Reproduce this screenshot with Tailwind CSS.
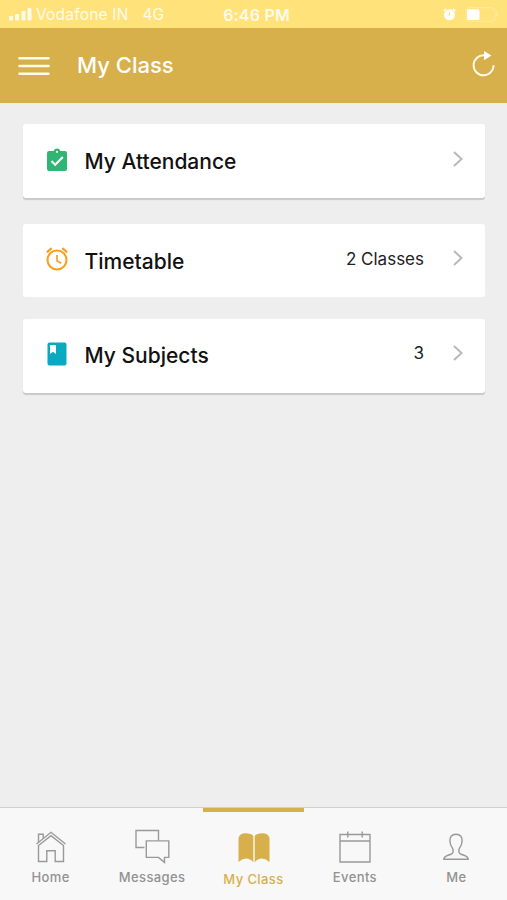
<!DOCTYPE html>
<html lang="en">
<head>
  <meta charset="UTF-8">
  <meta name="viewport" content="width=device-width, initial-scale=1.0">
  <title>My Class</title>
  <script src="https://cdn.jsdelivr.net/npm/@tailwindcss/browser@4"></script>
</head>
<body class="bg-[#eeeeee] font-['Inter',sans-serif]">

  <div class="w-full h-[900px] flex flex-col overflow-hidden">

    <!-- Status bar -->
    <div class="h-7 shrink-0 bg-[#ffe27a] text-white/85 grid grid-cols-[1fr_auto_1fr] items-center pl-[9px] pr-2 text-base leading-7">
      <div class="flex items-center whitespace-nowrap">
        <svg class="w-[23px] h-[13px] mr-[4px]" viewBox="0 0 23 13" fill="currentColor">
          <rect x="0" y="8" width="4" height="4.500" rx="1"/>
          <rect x="6" y="6" width="4" height="6.500" rx="1"/>
          <rect x="12.500" y="3" width="4" height="9.500" rx="1"/>
          <rect x="18.500" y="0" width="4" height="12.500" rx="1"/>
        </svg>
        <span class="text-[15.5px] mt-px tracking-[0.2px]">Vodafone IN</span>
        <span class="text-[15.5px] mt-px ml-[14px]">4G</span>
      </div>
      <span class="font-semibold text-[16px] mt-px ml-[5px] tracking-[0.2px]">6:46 PM</span>
      <div class="flex items-center justify-end">
        <svg class="w-[13px] h-[13px] mr-[9px]" viewBox="0 0 13 13">
          <circle cx="6.500" cy="6.800" r="5.500" fill="#fff"/>
          <path d="M.8 3 3 .9M12.200 3 10 .9" stroke="#fff" stroke-width="1.500"/>
          <path d="M6.500 4v3H4.500" stroke="#ffe27a" stroke-width="1" fill="none"/>
        </svg>
        <svg class="w-[34px] h-[15px]" viewBox="0 0 34 15">
          <rect x="1" y=".8" width="29" height="13.500" rx="3" fill="none" stroke="#fff" stroke-opacity=".3"/>
          <rect x="2" y="2.200" width="12.500" height="10.800" rx="1.500" fill="#fff"/>
          <path d="M32 5.500v4" stroke="#fff" stroke-opacity=".35" stroke-width="1.500"/>
        </svg>
      </div>
    </div>

    <!-- Header -->
    <header class="h-[75px] shrink-0 bg-[#d7b04c] text-white flex items-center pl-[18px] pr-3">
      <svg class="w-8 h-5" viewBox="0 0 32 20" fill="none" stroke="#fffbe9" stroke-width="2.600" stroke-linecap="round">
        <path d="M1.500 2.200h29M1.500 10h29M1.500 17.800h29"/>
      </svg>
      <h1 class="ml-[27px] text-[22px] leading-none font-medium -mt-px">My Class</h1>
      <svg class="ml-auto w-[23px] h-[26px] -mt-[3px]" viewBox="0 0 23 26">
        <path d="M12 4.300A10 10 0 1 0 21.600 14.300" fill="none" stroke="#fffbe9" stroke-width="1.900"/>
        <path d="M12 0v9.200l7.500-4.600z" fill="#fff"/>
      </svg>
    </header>

    <!-- Class menu -->
    <main class="flex-1 px-[22.5px] pt-[21px]">
      <a class="flex items-center h-[74px] pl-[23.5px] pr-[22px] bg-white rounded-[3px] shadow-[0_2px_1px_#c8c8c8]">
        <svg class="w-[22px] h-[24px] -mt-[3px]" viewBox="0 0 22 24">
          <path d="M3 3h4.600a3.600 3.600 0 0 1 6.800 0H19q2 0 2 2v16q0 2-2 2H3q-2 0-2-2V5q0-2 2-2z" fill="#2fb574"/>
          <circle cx="11" cy="3.800" r="1.100" fill="#fff"/>
          <path d="m5.500 13 3.700 3.700L16.800 9" fill="none" stroke="#fff" stroke-width="2.100"/>
        </svg>
        <span class="ml-[16.500px] mt-px text-[21px] leading-none font-medium text-[#111]">My Attendance</span>
        <svg class="ml-auto w-[10px] h-[16px] -mt-[5px]" viewBox="0 0 10 16" fill="none" stroke="#b9b9b9" stroke-width="2">
          <path d="m1 1 7.500 7L1 15"/>
        </svg>
      </a>

      <a class="flex items-center h-[73px] mt-[26px] pl-[23.5px] pr-[22px] bg-white rounded-[3px]">
        <svg class="w-[22px] h-[24px] -mt-[3px]" viewBox="0 0 22 24" fill="none" stroke="#f9a01f">
          <circle cx="11" cy="13" r="9.500" stroke-width="2.100"/>
          <path d="M.8 5.300 5.700 1.200M21.200 5.300l-4.900-4.100" stroke-width="2.200"/>
          <path d="M11 8v5.700l4.200 2.600" stroke-width="1.700"/>
        </svg>
        <span class="ml-[16.500px] mt-px text-[21px] leading-none font-medium text-[#111]">Timetable</span>
        <span class="ml-auto mr-[28.5px] -mt-[3px] text-[17px] leading-none text-[#222]">2 Classes</span>
        <svg class="w-[10px] h-[16px] -mt-[5px]" viewBox="0 0 10 16" fill="none" stroke="#b9b9b9" stroke-width="2">
          <path d="m1 1 7.500 7L1 15"/>
        </svg>
      </a>

      <a class="flex items-center h-[74px] mt-[21.5px] pl-[23.5px] pr-[22px] bg-white rounded-[3px] shadow-[0_2px_1px_#c8c8c8]">
        <svg class="w-[22px] h-[24px] -mt-[4px]" viewBox="0 0 22 24">
          <rect x="1.500" y=".5" width="19" height="23" rx="2" fill="#07aac0"/>
          <path d="M4 3h6v9L7 9.700 4 12z" fill="#fff"/>
        </svg>
        <span class="ml-[16.500px] text-[21px] leading-none font-medium text-[#111]">My Subjects</span>
        <span class="ml-auto mr-[28.5px] -mt-[4px] text-[17px] leading-none text-[#222]">3</span>
        <svg class="w-[10px] h-[16px] -mt-[6px]" viewBox="0 0 10 16" fill="none" stroke="#b9b9b9" stroke-width="2">
          <path d="m1 1 7.500 7L1 15"/>
        </svg>
      </a>
    </main>

    <!-- Tab bar -->
    <nav class="h-[93px] shrink-0 grid grid-cols-5 bg-[#f8f8f8] border-t border-[#cfcfcf] text-[#929292] text-[13px] font-medium tracking-[0.4px]">
      <a class="flex flex-col items-center pt-[22px]">
        <svg class="w-[32px] h-[34px]" viewBox="0 0 32 34" fill="none" stroke="#999" stroke-width="1.400">
          <path d="M1.500 14 16 2.300 30.500 14M3.500 15.500V31.500h8.300V20.700h8.400v10.800h8.300v-16L16 5.700z"/>
          <path d="M3.500 12V4.300h4.700v4"/>
        </svg>
        <span class="mt-[5px] leading-4">Home</span>
      </a>
      <a class="flex flex-col items-center pt-[20px]">
        <svg class="w-[36px] h-[36px]" viewBox="0 0 36 36" fill="none" stroke="#999" stroke-width="1.400">
          <path d="M10.500 19.500H2V2.500h22.500v10"/>
          <path d="M12.300 12.900h22.500v16.500h-4.300v5l-6-5H12.300z"/>
        </svg>
        <span class="mt-[5px] leading-4">Messages</span>
      </a>
      <a class="flex flex-col items-center border-t-4 border-[#d7b04c] text-[#d7b04c] pt-[20px]">
        <svg class="w-[32px] h-[31px] ml-px" viewBox="0 0 32 31" fill="#d7b04c">
          <path d="M.5 6Q1.500 1.200 7.500 1.200 13.500 1.200 15.300 4V30.300Q9 23 .5 30z"/>
          <path d="M31.500 6Q30.500 1.200 24.500 1.200 18.500 1.200 16.700 4V30.300Q23 23 31.500 30z"/>
        </svg>
        <span class="mt-[8px] leading-4">My Class</span>
      </a>
      <a class="flex flex-col items-center pt-[22px]">
        <svg class="w-[32px] h-[34px]" viewBox="0 0 32 34" fill="none" stroke="#999" stroke-width="1.400">
          <path d="M1 4.500h30v27.500H1zM1 11h30M8.800 1.500v6M23.200 1.500v6"/>
        </svg>
        <span class="mt-[5px] leading-4">Events</span>
      </a>
      <a class="flex flex-col items-center pt-[22px]">
        <svg class="w-[26px] h-[34px]" viewBox="0 0 26 34" fill="none" stroke="#999" stroke-width="1.400">
          <path d="M13 4.300c-4.500 0-6.300 3-6.100 6.700.1 4 1.200 5.500 2.800 7.500.8 2.500.6 4.500-1.200 5.500-4 1.700-7.300 1.600-7.700 5.200h24.400c-.4-3.600-3.700-3.500-7.700-5.200-1.800-1-2-3-1.200-5.500 1.600-2 2.700-3.500 2.800-7.500.2-3.700-1.600-6.700-6.100-6.700z"/>
        </svg>
        <span class="mt-[5px] leading-4">Me</span>
      </a>
    </nav>

  </div>

</body>
</html>
